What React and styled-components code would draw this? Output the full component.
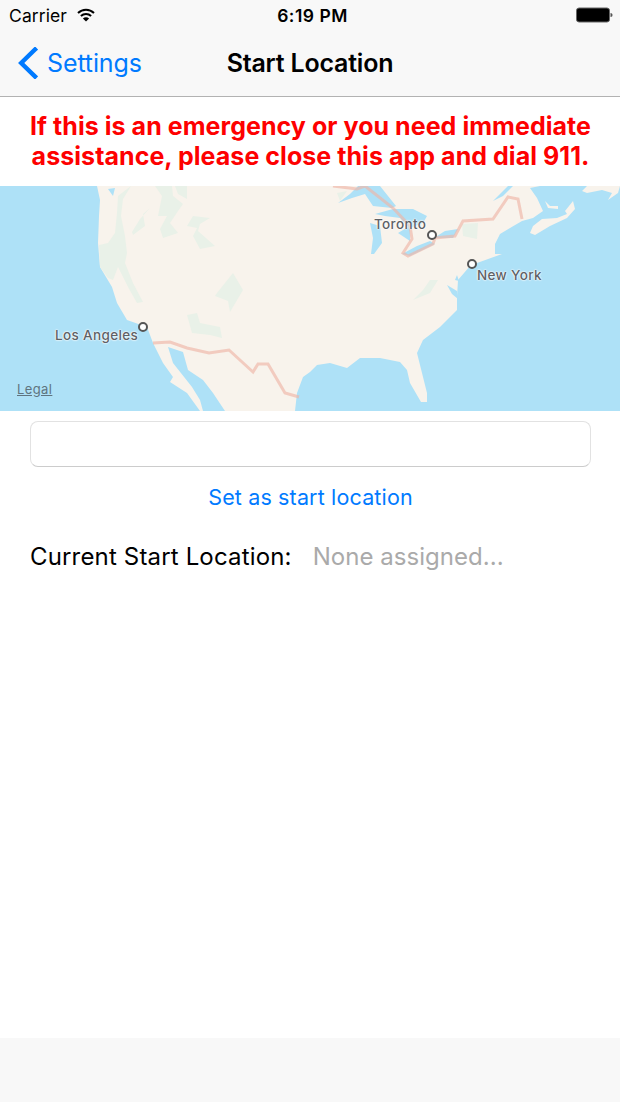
import React from "react";
import styled, { createGlobalStyle } from "styled-components";

const GlobalStyle = createGlobalStyle`
html, body {
    margin: 0;
    padding: 0;
    background: #fff;
}
`

const Screen = styled.div`
width: 620px;
height: 1102px;
display: flex;
flex-direction: column;
font-family: Inter, "Liberation Sans", sans-serif;
color: #000;
overflow: hidden;
`

const Header = styled.header`
background: #f8f8f8;
border-bottom: 1px solid #b2b2b2;
height: 96px;
flex: none;
`

const StatusBar = styled.div`
height: 30px;
padding: 0 7px 0 9px;
display: grid;
grid-template-columns: 1fr auto 1fr;
align-items: center;
font-size: 17.5px;
`

const Carrier = styled.div`
display: flex;
align-items: center;
gap: 10px;
letter-spacing: 0.1px;
`

const Clock = styled.div`
margin-left: 3px;
font-weight: 600;
letter-spacing: 0.5px;
`

const Battery = styled.div`
justify-self: end;
display: flex;
`

const NavBar = styled.nav`
height: 66px;
padding: 0 18px;
display: grid;
grid-template-columns: 1fr auto 1fr;
align-items: center;
`

const BackLink = styled.a`
display: flex;
align-items: center;
gap: 9px;
color: #007aff;
font-size: 25px;
letter-spacing: -0.12px;
`

const NavTitle = styled.h1`
margin: 0;
font-size: 25px;
font-weight: 600;
letter-spacing: -0.2px;
`

const Notice = styled.p`
margin: 0;
height: 89px;
padding: 14px 0 0 1px;
box-sizing: border-box;
flex: none;
color: #fe0000;
font-size: 25px;
line-height: 30px;
font-weight: 700;
text-align: center;
letter-spacing: 0.05px;
`

const MapView = styled.div`
position: relative;
height: 225px;
flex: none;
background: #aee1f7;
`

const MapArt = styled.svg`
display: block;
`

const Pin = styled.span`
position: absolute;
left: ${props => props.$x - 5}px;
top: ${props => props.$y - 5}px;
width: 6px;
height: 6px;
border: 2px solid #555;
border-radius: 50%;
background: #fff;
`

const CityLabel = styled.span`
position: absolute;
left: ${props => props.$x}px;
top: ${props => props.$y}px;
font-size: 13.5px;
font-weight: 500;
line-height: 16px;
letter-spacing: 0.35px;
color: #5d6166;
text-shadow: 0 0 2px #fff, 0 0 2px #fff, 0 0 1px #fff;
white-space: nowrap;
`

const LegalLink = styled.a`
position: absolute;
left: 17px;
top: 195px;
font-size: 13px;
line-height: 16px;
letter-spacing: 0.4px;
color: #5f7480;
text-decoration: underline;
`

const Form = styled.section`
flex: 1;
padding: 10px 29px 0 30px;
display: flex;
flex-direction: column;
`

const SearchInput = styled.input`
display: block;
box-sizing: border-box;
width: 100%;
height: 46px;
border: 1px solid #e2e2e2;
border-bottom-color: #ccc;
border-radius: 8px;
background: #fff;
outline: none;
`

const SetButton = styled.button`
margin: 15px 0 0;
padding: 0;
height: 30px;
border: 0;
background: none;
color: #007aff;
font-family: inherit;
font-size: 21.5px;
letter-spacing: 0.15px;
text-align: center;
`

const CurrentRow = styled.div`
margin-top: 30px;
display: flex;
gap: 21px;
font-size: 24px;
line-height: 30px;
letter-spacing: 0.16px;
`

const AssignedValue = styled.span`
color: #aaa;
letter-spacing: 0.04px;
`

const BottomBar = styled.footer`
height: 64px;
flex: none;
background: #f8f8f8;
`

const WifiIcon = () => (
    <svg width="18" height="14" viewBox="0 0 18 14" fill="none" stroke="#000" strokeWidth="2">
        <path d="M1 5 C5.5 0.6 12.5 0.6 17 5" />
        <path d="M3.9 8 C6.8 5.2 11.2 5.2 14.1 8" />
        <path d="M9 13.6 L5.9 10.4 C7.7 8.8 10.3 8.8 12.1 10.4 Z" fill="#000" stroke="none" />
    </svg>
);

const BatteryIcon = () => (
    <svg width="37" height="16" viewBox="0 0 37 16">
        <rect x="0.5" y="1" width="33" height="14" rx="2.5" fill="#000" stroke="#666" strokeWidth="1" />
        <path d="M34.5 6 C36 6 36.5 7 36.5 8 C36.5 9 36 10 34.5 10 Z" fill="#555" />
    </svg>
);

const Chevron = () => (
    <svg width="20" height="32" viewBox="0 0 20 32" fill="none" stroke="#007aff" strokeWidth="4.4" strokeLinecap="square">
        <path d="M17 2.5 L3.2 16 L17 29.5" />
    </svg>
);

const LAND = "97,0 100,14 99,30 98,57 100,81 112,101 117,117 127,134 147,141 153,157 163,177 173,191 170,196 187,207 200,225 203,225 200,214 192,201 173,177 168,161 183,166 188,184 203,194 213,207 225,225 295,225 297,207 303,191 310,186 317,179 330,177 347,182 360,172 380,172 400,176 407,184 410,197 421,216 427,216 427,207 423,191 417,167 423,154 440,141 457,124 457,111 458,94 470,80 477,77 502,68 495,68 495,58 500,48 510,42 522,35 533,32 543,25 537,12 530,2 540,0";
const ISLANDS = [
    "530,47 533,40 542,33 557,32 567,28 565,25 573,15 575,23 567,32 550,40 535,49",
    "545,15 550,20 558,20 558,23 548,22",
    "582,5 587,0 620,0 618,7 608,14 612,7 602,4 587,7",
];
const LAKES = [
    "338,17 350,8 358,0 380,0 396,20 392,22 373,20 365,8 352,12",
    "370,37 373,52 371,68 374,68 382,57 380,40",
    "375,28 393,23 413,23 427,30 423,37 410,42 410,55 398,47 408,41 400,32 385,30",
    "402,68 410,70 435,58 430,55 417,60",
    "437,50 445,45 458,43 453,52 437,52",
    "493,15 500,8 508,0 513,0 503,10",
    "108,3 115,2 113,10",
    "447,99 457,105 458,113 452,108",
    "455,94 457,89 459,95",
];
const FOREST = [
    "118,10 131,0 123,13 121,30 125,50 127,67 125,77 133,97 143,116 137,117 128,101 118,81 113,94 108,92 100,81 99,59 108,57 115,47 117,27",
    "155,0 172,0 173,10 183,18 178,25 170,37 178,47 163,52 160,43 167,30 158,30 162,10",
    "175,0 187,0 187,13 178,8",
    "150,22 143,28 145,40 133,49 132,46 140,33",
    "193,30 210,32 200,38 198,45 215,60 200,63 193,50 197,42 187,40",
    "217,107 233,87 243,104 230,126 228,115 215,110",
    "187,129 197,127 200,137 220,141 222,152 210,149 192,147",
    "462,38 478,37 477,53 463,50",
    "430,94 438,94 430,107 413,114 423,104",
    "337,7 347,5 340,15",
];
const BORDERS = [
    "333,0 357,3 365,0 393,22 410,40 412,53 403,67 408,70 433,58 435,52 455,50 463,35 493,33 508,11 518,13 522,33",
    "153,157 170,156 187,162 209,167 229,164 253,186 258,178 268,178 285,207 299,211",
];
const CITIES = [
    { name: "Los Angeles", x: 55, y: 141, px: 143, py: 141 },
    { name: "Toronto", x: 374, y: 30, px: 432, py: 49 },
    { name: "New York", x: 477, y: 81, px: 472, py: 78 },
];

const App = () => {
    return (
        <Screen>
            <GlobalStyle />
            <Header>
                <StatusBar>
                    <Carrier>Carrier <WifiIcon /></Carrier>
                    <Clock>6:19 PM</Clock>
                    <Battery><BatteryIcon /></Battery>
                </StatusBar>
                <NavBar>
                    <BackLink><Chevron />Settings</BackLink>
                    <NavTitle>Start Location</NavTitle>
                </NavBar>
            </Header>
            <Notice>
                If this is an emergency or you need immediate<br />
                assistance, please close this app and dial 911.
            </Notice>
            <MapView>
                <MapArt width="620" height="225" viewBox="0 0 620 225">
                    <polygon points={LAND} fill="#f8f3ec" />
                    {ISLANDS.map(p => <polygon key={p} points={p} fill="#f8f3ec" />)}
                    {FOREST.map(p => <polygon key={p} points={p} fill="#e9f1e8" />)}
                    {LAKES.map(p => <polygon key={p} points={p} fill="#aee1f7" />)}
                    {BORDERS.map(p => <polyline key={p} points={p} fill="none" stroke="#eeb5a8" strokeOpacity="0.65" strokeWidth="3" />)}
                </MapArt>
                {CITIES.map(c => (
                    <React.Fragment key={c.name}>
                        <Pin $x={c.px} $y={c.py} />
                        <CityLabel $x={c.x} $y={c.y}>{c.name}</CityLabel>
                    </React.Fragment>
                ))}
                <LegalLink>Legal</LegalLink>
            </MapView>
            <Form>
                <SearchInput />
                <SetButton>Set as start location</SetButton>
                <CurrentRow>
                    <span>Current Start Location:</span>
                    <AssignedValue>None assigned...</AssignedValue>
                </CurrentRow>
            </Form>
            <BottomBar />
        </Screen>
    )
}

export default App;
